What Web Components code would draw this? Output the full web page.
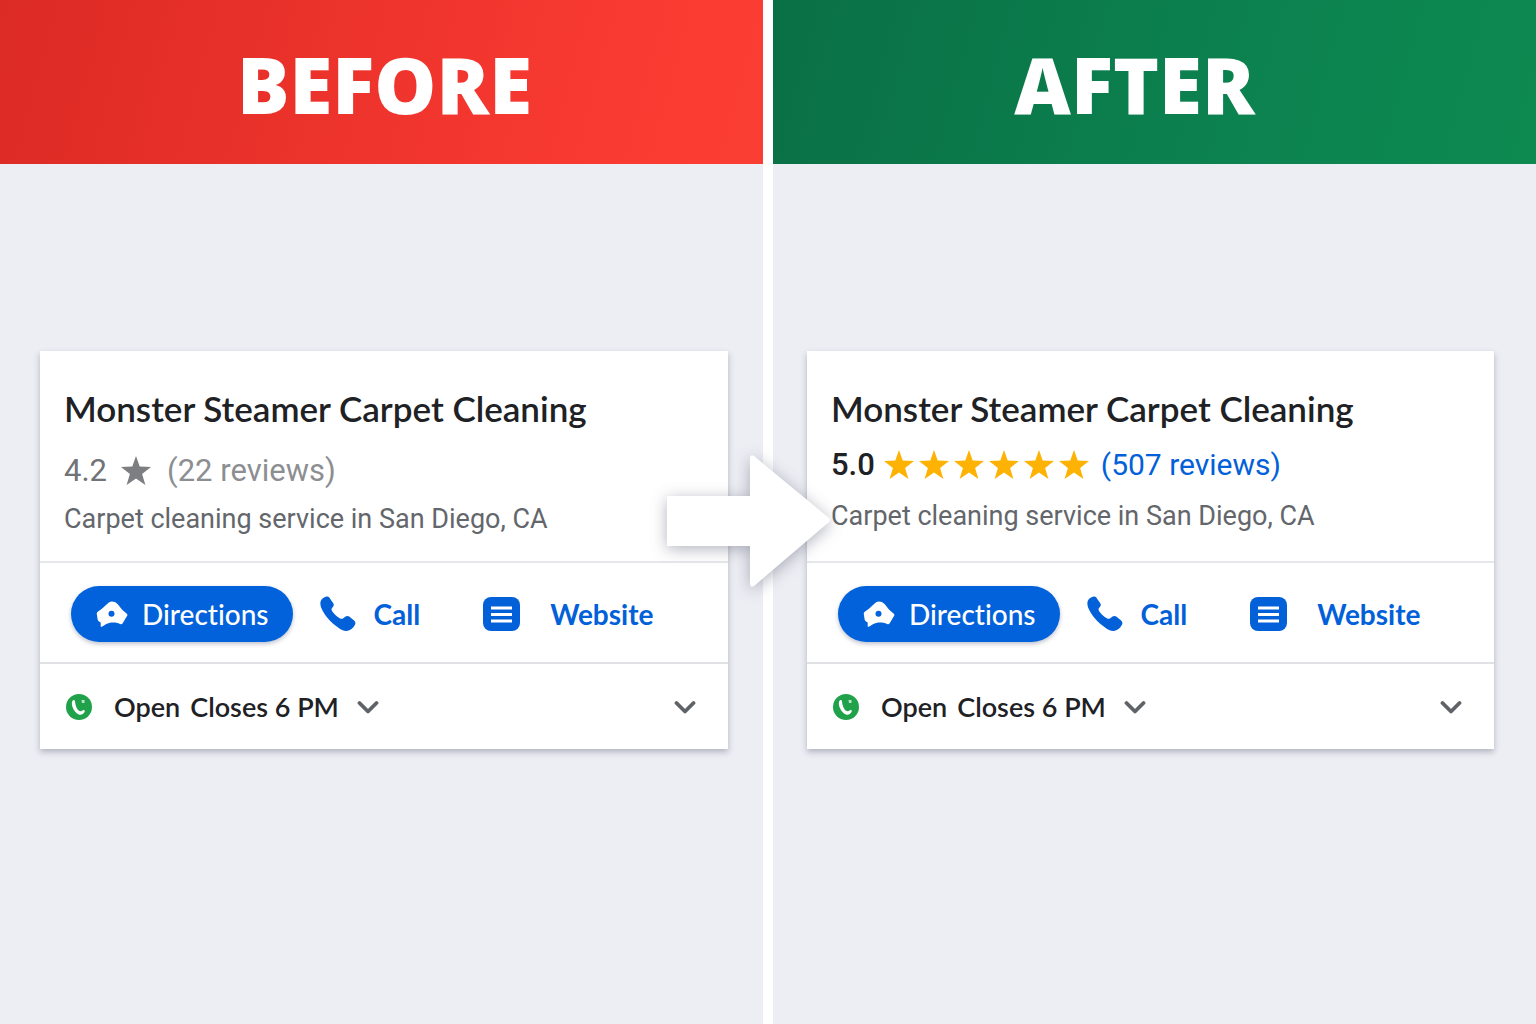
<!DOCTYPE html>
<html lang="en">
<head>
<meta charset="utf-8">
<meta name="viewport" content="width=device-width, initial-scale=1">
<title>Before / After</title>
<style>
  body{
    margin: 0;
    font-family: Lato, "Liberation Sans", sans-serif;
    font-variant-ligatures: none;
    color: #202124;
  }
</style>
</head>
<body>
<compare-board>
  <compare-panel kind="before" slot="before" heading="BEFORE">
    <business-card name="Monster Steamer Carpet Cleaning" rating="4.2" stars="1" reviews="22" muted>
      Carpet cleaning service in San Diego, CA
    </business-card>
  </compare-panel>
  <compare-panel kind="after" slot="after" heading="AFTER">
    <business-card name="Monster Steamer Carpet Cleaning" rating="5.0" stars="6" reviews="507">
      Carpet cleaning service in San Diego, CA
    </business-card>
  </compare-panel>
</compare-board>

<script>
const icons = {
  star: `<svg width="30" height="30" viewBox="0 0 30 30"><path fill="currentColor" d="M15 0l3.700 10.600L30 11l-8.900 6.900L24.400 29 15 22.500 5.600 29l3.300-11.100L0 11l11.300-.4z"/></svg>`,
  directions: `<svg width="32" height="26" viewBox="0 0 32 26"><path fill="currentColor" fill-rule="evenodd" d="M10 4C12.500 1.500 14 .5 16 .5s4 .8 5.500 2.500c1.800 2 3.500 4.700 5.500 6.500l3.800 3.200c.7.700.8 1.500.2 2.300l-4.300 7.200c-.6 1-1.400 1.200-2.500.8-5.300-2-10-2-14.300.2l-4 2.500c-.7.400-1.200 0-1.200-.8v-3.500c-2-.8-3-1.900-3.200-3.600L.8 13c-.1-1.200.3-1.900 1.300-2.600C5 8.500 7.500 6.500 10 4zM15.500 9.800a3 3 0 1 0 0 6 3 3 0 0 0 0-6z"/></svg>`,
  call: `<svg width="36" height="36" viewBox="0 0 36 36"><path fill="currentColor" d="M2 3C4 1.200 6 .3 7.500.6c1.200.2 1.900 1 2.600 2.100l3 4.300c.9 1.400.9 2.500.1 3.500-.7 1-1.700 1.700-1.700 3 .1 2.400 6 7.700 8.700 9 1.400.6 2.300.2 3.400-.6l1.900-1.400c1.200-.8 2.500-.8 3.700 0l4.900 4c1.500 1.300 1.700 2.800.7 4.600-1.700 3.200-4.400 5.600-8 5.800-3 .2-6-1.400-8.700-3.500C11 27 4.500 19.500 1.300 12 0 8.800-.1 5.200 2 3z"/></svg>`,
  website: `<svg width="37" height="34" viewBox="0 0 37 34"><rect width="37" height="34" rx="8" fill="currentColor"/><path stroke="#fff" stroke-width="2.800" d="M8 11h21M8 17.500h21M8 24h21"/></svg>`,
  open: `<svg width="26" height="26" viewBox="0 0 26 26"><circle cx="13" cy="13" r="13" fill="#1fa24a"/><path fill="#fff" d="M6.800 6.500c1-.8 2-.5 2.200.7.300 3.800 1.700 8.200 4.700 9.900 1.700.7 2.600-1.400 4.300-1.200.9.200 1 1.200.5 2.200-.8 1.900-3 3-5 2.600C9.300 19.700 5.300 13 5.900 8.500c.1-.9.400-1.600.9-2z"/><path fill="#fff" d="M15.500 6h3v3h-2.500z" opacity=".7"/></svg>`,
  chevron: `<svg width="22" height="14" viewBox="0 0 22 14"><path fill="none" stroke="#5f6368" stroke-width="3.800" stroke-linecap="round" stroke-linejoin="round" d="M2.500 3L11 11.500 19.500 3"/></svg>`
};

class CompareBoard extends HTMLElement{
  constructor(){
    super();
    this.attachShadow({mode:'open'});
  }

  connectedCallback(){
    const html =
    `
    <slot name="before"></slot>
    <slot name="after"></slot>
    <big-arrow></big-arrow>
    `
    const css =
    `
    <style>
      :host{
        position: relative;
        display: grid;
        grid-template-columns: 1fr 1fr;
        column-gap: 10px;
        min-height: 100vh;
        background: #fff;
      }
      big-arrow{
        position: absolute;
        top: 453px;
        left: calc(50% - 102px);
      }
    </style>
    `
    this.shadowRoot.innerHTML = html + css;
  }
}
customElements.define('compare-board',CompareBoard);

class BigArrow extends HTMLElement{
  constructor(){
    super();
    this.attachShadow({mode:'open'});
  }

  connectedCallback(){
    const html =
    `
    <svg width="168" height="138" viewBox="0 0 168 138" aria-hidden="true">
      <path d="M1 43H84V5q0-4 4-2L163 65q2 2 0 4L88 133q-4 2-4-2V93H1z"/>
    </svg>
    `
    const css =
    `
    <style>
      :host{
        display: block;
        pointer-events: none;
      }
      svg{
        display: block;
        overflow: visible;
        fill: #fff;
        filter: drop-shadow(0 3px 8px rgba(50,54,80,.38));
      }
    </style>
    `
    this.shadowRoot.innerHTML = html + css;
  }
}
customElements.define('big-arrow',BigArrow);

class ComparePanel extends HTMLElement{
  constructor(){
    super();
    this.attachShadow({mode:'open'});
  }

  connectedCallback(){
    const html =
    `
    <header><h1>${this.getAttribute('heading')}</h1></header>
    <main><slot></slot></main>
    `
    const css =
    `
    <style>
      :host{
        display: flex;
        flex-direction: column;
        min-width: 0;
        background: #edeef4;
      }
      header{
        display: flex;
        align-items: center;
        justify-content: center;
        height: 164px;
        box-sizing: border-box;
        padding: 4px 0 0 6px;
        background: linear-gradient(105deg, #dc2a24, #f93a32 80%, #fb3e34);
      }
      h1{
        margin: 0;
        font: 900 78px/1 "Noto Sans", "Open Sans", sans-serif;
        color: #fff;
      }
      main{
        padding: 187px 35px 40px 40px;
      }
      :host([kind="after"]) header{
        padding: 4px 40px 0 0;
        background: linear-gradient(105deg, #0a7045, #0c8350 65%, #0d8a50);
      }
      :host([kind="after"]) main{
        padding: 187px 42px 40px 34px;
      }
    </style>
    `
    this.shadowRoot.innerHTML = html + css;
  }
}
customElements.define('compare-panel',ComparePanel);

class BusinessCard extends HTMLElement{
  constructor(){
    super();
    this.attachShadow({mode:'open'});
  }

  connectedCallback(){
    const stars = icons.star.repeat(Number(this.getAttribute('stars')));
    const html =
    `
    <section class="info">
      <h2>${this.getAttribute('name')}</h2>
      <div class="rating">
        <span class="score">${this.getAttribute('rating')}</span>
        <span class="stars">${stars}</span>
        <a href="#reviews">(${this.getAttribute('reviews')} reviews)</a>
      </div>
      <p><slot></slot></p>
    </section>
    <section class="actions">
      <button class="directions">${icons.directions}Directions</button>
      <a class="call" href="#call">${icons.call}Call</a>
      <a class="website" href="#website">${icons.website}Website</a>
    </section>
    <section class="hours">
      ${icons.open}
      <button class="times"><span>Open</span><span>Closes 6 PM</span>${icons.chevron}</button>
      <button class="more" aria-label="More details">${icons.chevron}</button>
    </section>
    `
    const css =
    `
    <style>
      :host{
        display: block;
        background: #fff;
        box-shadow: 0 3px 6px rgba(50,54,80,.32);
      }
      svg{
        display: block;
        flex: none;
      }
      button{
        border: 0;
        padding: 0;
        background: none;
        font: inherit;
        color: inherit;
        cursor: pointer;
      }
      a{
        text-decoration: none;
        color: #0260d9;
      }
      .info{
        height: 210px;
        box-sizing: border-box;
        padding: 36px 24px 0;
      }
      h2{
        margin: 0;
        font-size: 35px;
        line-height: 42px;
        font-weight: 600;
        white-space: nowrap;
      }
      .rating{
        display: flex;
        align-items: center;
        height: 36px;
        margin-top: 18px;
        font-family: Roboto, sans-serif;
        font-size: 31px;
        line-height: 36px;
        font-weight: 500;
      }
      .rating a{
        margin-left: 12px;
        font-size: 30px;
        font-weight: 400;
      }
      .stars{
        display: flex;
        gap: 5px;
        margin-left: 9px;
        color: #fdb204;
      }
      p{
        margin: 17px 0 0;
        font-family: Roboto, sans-serif;
        font-size: 27px;
        line-height: 32px;
        color: #63666b;
        white-space: nowrap;
      }
      :host([muted]) .rating{
        margin-top: 24px;
        font-weight: 400;
        color: #717377;
      }
      :host([muted]) .rating a{
        margin-left: 16px;
        font-size: 31px;
        color: #8c8e92;
      }
      :host([muted]) .stars{
        margin-left: 14px;
        color: #7c7e81;
      }
      :host([muted]) p{
        margin-top: 14px;
      }
      .actions{
        display: flex;
        align-items: center;
        height: 101px;
        box-sizing: border-box;
        padding: 2px 31px 0;
        border-top: 2px solid #e6e7eb;
        font-size: 28px;
        line-height: 36px;
        font-weight: 700;
      }
      .actions a{
        display: flex;
        align-items: center;
      }
      .directions{
        display: flex;
        align-items: center;
        gap: 14px;
        height: 56px;
        padding: 0 24px 0 25px;
        border-radius: 28px;
        background: #0262db;
        color: #fff;
        font-weight: 500;
        box-shadow: 0 2px 4px rgba(40,50,90,.3);
      }
      .call{
        gap: 18px;
        margin-left: 27px;
      }
      .website{
        gap: 30px;
        margin-left: 63px;
      }
      .hours{
        display: flex;
        align-items: center;
        height: 87px;
        box-sizing: border-box;
        padding: 0 32px 0 26px;
        border-top: 2px solid #e0e1e5;
        font-size: 27px;
        font-weight: 600;
      }
      .times{
        display: flex;
        align-items: center;
        gap: 10px;
        margin-left: 22px;
      }
      .times svg{
        margin-left: 8px;
      }
      .more{
        margin-left: auto;
      }
    </style>
    `
    this.shadowRoot.innerHTML = html + css;
  }
}
customElements.define('business-card',BusinessCard);
</script>
</body>
</html>
